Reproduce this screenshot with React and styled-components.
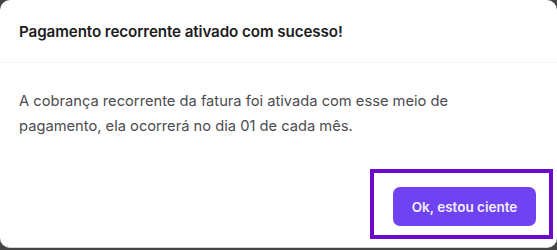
import React from "react";
import styled, { createGlobalStyle } from "styled-components";

const Global = createGlobalStyle`
  html, body { margin: 0; padding: 0; background: #444; }
  body { font-family: Inter, "Noto Sans", sans-serif; -webkit-font-smoothing: antialiased; }
  #root { width: 557px; height: 250px; overflow: hidden; }
`;

const Modal = styled.div`
  width: 557px;
  height: 248px;
  background: #fff;
  border-radius: 10px;
  border-bottom: 1px solid #d4d4d4;
  box-sizing: border-box;
  display: flex;
  flex-direction: column;
`;

const Header = styled.div`
  height: 62px;
  padding: 0 19px;
  display: flex;
  align-items: center;
  border-bottom: 1px solid #f6f6f6;
`;

const Title = styled.h2`
  margin: 0;
  font-size: 15.2px;
  font-weight: 600;
  color: #1c1c1e;
  letter-spacing: -0.1px;
`;

const Body = styled.div`
  padding: 26px 19px 0;
`;

const Text = styled.p`
  margin: 0;
  font-size: 14.7px;
  line-height: 25px;
  color: #4b4b4f;
  max-width: 470px;
`;

const Footer = styled.div`
  margin-top: auto;
  padding: 0 21px 21px;
  display: flex;
  justify-content: flex-end;
`;

const Highlight = styled.div`
  position: relative;
`;

const Frame = styled.span`
  position: absolute;
  left: -23px;
  top: -18px;
  right: -17px;
  bottom: -13px;
  border: 4px solid #6a0bcd;
  pointer-events: none;
`;

const Button = styled.button`
  width: 143px;
  height: 39px;
  border: none;
  border-radius: 7px;
  background: #6f43f1;
  color: #f4efff;
  font-family: Inter, "Noto Sans", sans-serif;
  font-size: 13.5px;
  font-weight: 600;
  cursor: pointer;
`;

export default function App() {
  return (
    <>
      <Global />
      <Modal>
        <Header>
          <Title>Pagamento recorrente ativado com sucesso!</Title>
        </Header>
        <Body>
          <Text>
            A cobrança recorrente da fatura foi ativada com esse meio de pagamento, ela ocorrerá no dia 01 de cada mês.
          </Text>
        </Body>
        <Footer>
          <Highlight>
            <Button>Ok, estou ciente</Button>
            <Frame />
          </Highlight>
        </Footer>
      </Modal>
    </>
  );
}
